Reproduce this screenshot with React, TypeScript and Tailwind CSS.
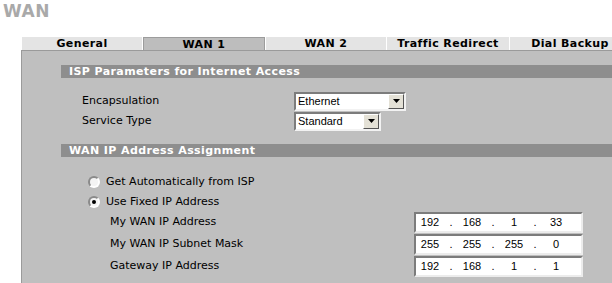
import React from 'react';

const tabs = [
  { label: 'General', width: 'w-[120px]', active: false },
  { label: 'WAN 1', width: 'w-[122px]', active: true },
  { label: 'WAN 2', width: 'w-[120px]', active: false },
  { label: 'Traffic Redirect', width: 'w-[122px]', active: false },
  { label: 'Dial Backup', width: 'w-[120px]', active: false },
];

const ipRows = [
  { label: 'My WAN IP Address', parts: ['192', '168', '1', '33'] },
  { label: 'My WAN IP Subnet Mask', parts: ['255', '255', '255', '0'] },
  { label: 'Gateway IP Address', parts: ['192', '168', '1', '1'] },
];

function SectionBar({ title }: { title: string }) {
  return (
    <div className="ml-[39px] h-[13px] bg-[#8e8e8e] pl-[8px] text-[11px] font-bold leading-[13px] tracking-[0.4px] text-white">
      {title}
    </div>
  );
}

function Select({ value, className }: { value: string; className: string }) {
  return (
    <div
      className={`flex h-[19px] border-2 border-t-[#7c7c7c] border-l-[#7c7c7c] border-r-[#f2f2f2] border-b-[#f2f2f2] bg-white ${className}`}
    >
      <div className="flex-1 pl-[2px] font-['Liberation_Sans',Arial,sans-serif] text-[11px] leading-[15px] text-black">
        {value}
      </div>
      <div className="flex w-[16px] items-center justify-center border border-t-white border-l-white border-r-[#555] border-b-[#555] bg-[#e4e1d6]">
        <svg width="7" height="4" viewBox="0 0 7 4">
          <path d="M0 0h7L3.5 4z" fill="#000" />
        </svg>
      </div>
    </div>
  );
}

function Radio({ checked }: { checked?: boolean }) {
  return (
    <span className="flex h-[12px] w-[12px] items-center justify-center rounded-full border-2 border-t-[#8a8a8a] border-l-[#8a8a8a] border-r-white border-b-white bg-[#f4f4f4]">
      {checked && <span className="h-[4px] w-[4px] rounded-full bg-black" />}
    </span>
  );
}

function IpBox({ parts }: { parts: string[] }) {
  return (
    <div className="flex h-[21px] w-[169px] items-center border-2 border-t-[#7c7c7c] border-l-[#7c7c7c] border-r-[#ececec] border-b-[#ececec] bg-white font-['Liberation_Sans',Arial,sans-serif] text-[11px] leading-[15px] text-black">
      {parts.map((part, i) => (
        <React.Fragment key={i}>
          {i > 0 && <span className="w-[14px] text-center">.</span>}
          <span className="w-[28px] text-center">{part}</span>
        </React.Fragment>
      ))}
    </div>
  );
}

export default function App() {
  return (
    <div className="relative h-[283px] w-[612px] overflow-hidden bg-white font-['DejaVu_Sans',Verdana,sans-serif] text-black">
      <div className="h-[37px] pl-[3px] pt-[1px] text-[17px] font-bold leading-[20px] tracking-[0.5px] text-[#a9a9a9]">
        WAN
      </div>

      <div className="ml-[22px] flex h-[13px] gap-[1px]">
        {tabs.map((tab) => (
          <div
            key={tab.label}
            className={`${tab.width} shrink-0 text-center text-[11px] font-bold leading-[13px] tracking-[0.4px] ${
              tab.active ? 'border border-b-0 border-[#9c9c9c] bg-[#bdbdbd] leading-[12px]' : 'bg-[#e4e4e4]'
            }`}
          >
            {tab.label}
          </div>
        ))}
      </div>

      <div className="ml-[21px] h-[233px] border-t border-l border-[#9a9a9a] bg-[#bfbfbf] pt-[14px]">
        <SectionBar title="ISP Parameters for Internet Access" />

        <div className="mt-[13px] text-[11px]">
          <div className="flex h-[20px] items-center pl-[60px]">
            <span className="w-[212px] pt-[1px]">Encapsulation</span>
            <Select value="Ethernet" className="w-[112px]" />
          </div>
          <div className="flex h-[20px] items-center pl-[60px]">
            <span className="w-[212px] pt-[1px]">Service Type</span>
            <Select value="Standard" className="w-[87px]" />
          </div>
        </div>

        <div className="mt-[13px]">
          <SectionBar title="WAN IP Address Assignment" />
        </div>

        <div className="mt-[15px] text-[11px]">
          <div className="flex h-[20px] items-center gap-[6px] pl-[66px]">
            <Radio />
            <span className="pt-[1px]">Get Automatically from ISP</span>
          </div>
          <div className="flex h-[19px] items-center gap-[6px] pl-[66px]">
            <Radio checked />
            <span className="pt-[1px]">Use Fixed IP Address</span>
          </div>
          {ipRows.map((row) => (
            <div key={row.label} className="flex h-[22px] items-center pl-[88px]">
              <span className="w-[304px] pt-[1px]">{row.label}</span>
              <IpBox parts={row.parts} />
            </div>
          ))}
        </div>
      </div>
    </div>
  );
}
